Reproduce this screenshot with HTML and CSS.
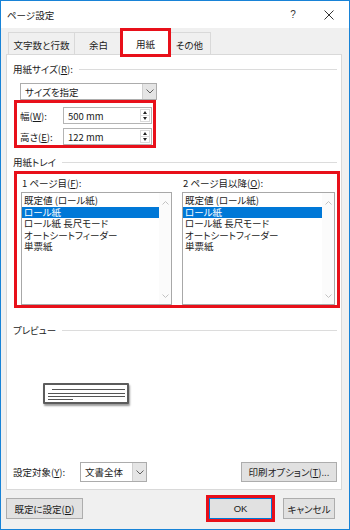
FILE: index.html
```html
<!DOCTYPE html>
<html lang="ja">

<head>
    <meta charset="UTF-8" />
    <title>ページ設定</title>
    <link rel="stylesheet" href="styles.css">
</head>

<body>

    <div class="dialog">
        <div class="titlebar">
            <span class="title">ページ設定</span>
            <span class="help">?</span>
            <span class="close">
                <svg width="10" height="10" viewBox="0 0 10 10">
                    <path d="M0.5 0.5 L9.5 9.5 M9.5 0.5 L0.5 9.5" stroke="#333" stroke-width="1" fill="none" />
                </svg>
            </span>
        </div>

        <div class="body">
            <div class="tabs">
                <div class="tab tab-1">文字数と行数</div>
                <div class="tab tab-2">余白</div>
                <div class="tab tab-3 active">用紙</div>
                <div class="tab tab-4">その他</div>
            </div>

            <div class="panel">
                <div class="group first"><span>用紙サイズ(<u>R</u>):</span></div>

                <div class="combo size-combo">
                    <span class="combo-text">サイズを指定</span>
                    <span class="drop">
                        <svg width="8" height="5" viewBox="0 0 8 5">
                            <path d="M0.5 0.5 L4 4 L7.5 0.5" stroke="#606060" fill="none" />
                        </svg>
                    </span>
                </div>

                <div class="dims mark">
                    <div class="dim-row">
                        <label>幅(<u>W</u>):</label>
                        <div class="spin">
                            <span class="spin-val">500 mm</span>
                            <span class="spin-btns">
                                <span class="up"></span>
                                <span class="down"></span>
                            </span>
                        </div>
                    </div>
                    <div class="dim-row">
                        <label>高さ(<u>E</u>):</label>
                        <div class="spin">
                            <span class="spin-val">122 mm</span>
                            <span class="spin-btns">
                                <span class="up"></span>
                                <span class="down"></span>
                            </span>
                        </div>
                    </div>
                </div>

                <div class="group tray-group"><span>用紙トレイ</span></div>

                <div class="trays mark">
                    <div class="tray tray-1">
                        <div class="tray-label">1 ページ目(<u>F</u>):</div>
                        <div class="listbox">
                            <div class="items">
                                <div class="item">既定値 (ロール紙)</div>
                                <div class="item selected">ロール紙</div>
                                <div class="item">ロール紙 長尺モード</div>
                                <div class="item">オートシートフィーダー</div>
                                <div class="item">単票紙</div>
                            </div>
                            <div class="scrollbar">
                                <svg width="7" height="4" viewBox="0 0 7 4">
                                    <path d="M0.5 3.5 L3.5 0.5 L6.5 3.5" stroke="#c2c2c2" fill="none" />
                                </svg>
                                <svg width="7" height="4" viewBox="0 0 7 4">
                                    <path d="M0.5 0.5 L3.5 3.5 L6.5 0.5" stroke="#c2c2c2" fill="none" />
                                </svg>
                            </div>
                        </div>
                    </div>
                    <div class="tray tray-2">
                        <div class="tray-label">2 ページ目以降(<u>O</u>):</div>
                        <div class="listbox">
                            <div class="items">
                                <div class="item">既定値 (ロール紙)</div>
                                <div class="item selected">ロール紙</div>
                                <div class="item">ロール紙 長尺モード</div>
                                <div class="item">オートシートフィーダー</div>
                                <div class="item">単票紙</div>
                            </div>
                            <div class="scrollbar">
                                <svg width="7" height="4" viewBox="0 0 7 4">
                                    <path d="M0.5 3.5 L3.5 0.5 L6.5 3.5" stroke="#c2c2c2" fill="none" />
                                </svg>
                                <svg width="7" height="4" viewBox="0 0 7 4">
                                    <path d="M0.5 0.5 L3.5 3.5 L6.5 0.5" stroke="#c2c2c2" fill="none" />
                                </svg>
                            </div>
                        </div>
                    </div>
                </div>

                <div class="group preview-group"><span>プレビュー</span></div>

                <div class="preview">
                    <div class="pline l1"></div>
                    <div class="pline l2"></div>
                    <div class="pline l3"></div>
                    <div class="pline l4"></div>
                </div>

                <div class="apply-row">
                    <span class="apply-label">設定対象(<u>Y</u>):</span>
                    <div class="combo apply-combo">
                        <span class="combo-text">文書全体</span>
                        <span class="drop">
                            <svg width="8" height="5" viewBox="0 0 8 5">
                                <path d="M0.5 0.5 L4 4 L7.5 0.5" stroke="#606060" fill="none" />
                            </svg>
                        </span>
                    </div>
                    <button class="btn print-btn">印刷オプション(<u>T</u>)...</button>
                </div>
            </div>

            <div class="footer">
                <button class="btn default-btn">既定に設定(<u>D</u>)</button>
                <button class="btn ok-btn">OK</button>
                <button class="btn cancel-btn">キャンセル</button>
            </div>
        </div>
    </div>

</body>

</html>
```

FILE: styles.css
```css
* {
    box-sizing: border-box;
}

body {
    margin: 0;
    font-family: "Noto Sans CJK JP", "Noto Sans", sans-serif;
    font-size: 9.5px;
    font-feature-settings: "palt";
    color: #1a1a1a;
    background: #fff;
}

u {
    text-decoration: underline;
    text-underline-offset: 1px;
}

.dialog {
    width: 350px;
    height: 530px;
    border: 1px solid #1883d7;
    display: flex;
    flex-direction: column;
    background: #f0f0f0;
}

/* --- title bar --- */
.titlebar {
    height: 27px;
    background: #fff;
    display: flex;
    align-items: center;
    padding-left: 6px;
    flex-shrink: 0;
}

.title {
    flex: 1;
}

.help {
    width: 30px;
    text-align: center;
    font-family: "Liberation Sans", sans-serif;
    font-size: 10px;
    color: #333;
}

.close {
    width: 41px;
    display: flex;
    justify-content: center;
    align-items: center;
}

/* --- body --- */
.body {
    flex: 1;
    display: flex;
    flex-direction: column;
    padding: 0 7px 0 5px;
}

.tabs {
    height: 26px;
    display: flex;
    align-items: flex-end;
    padding-left: 2px;
    flex-shrink: 0;
}

.tab {
    height: 22px;
    border: 1px solid #d9d9d9;
    border-bottom: none;
    background: #f0f0f0;
    display: flex;
    align-items: center;
    justify-content: center;
    padding-top: 2px;
    margin-right: -1px;
}

.tab-1 {
    width: 67px;
}

.tab-2 {
    width: 49px;
}

.tab-3 {
    width: 47px;
}

.tab-4 {
    width: 43px;
}

.tab.active {
    height: 25px;
    margin-bottom: -1px;
    background: #fff;
    position: relative;
    z-index: 1;
    outline: 3px solid #e8101a;
    outline-offset: -1px;
}

.panel {
    flex: 1;
    border: 1px solid #d9d9d9;
    background: #fff;
    padding: 0 4px 0 6px;
    display: flex;
    flex-direction: column;
}

.group {
    display: flex;
    align-items: center;
    height: 12px;
    line-height: 12px;
    gap: 6px;
    white-space: nowrap;
}

.group::after {
    content: "";
    flex: 1;
    height: 1px;
    background: #dcdcdc;
}

.group.first {
    margin-top: 8px;
}

.mark {
    outline: 3px solid #e8101a;
}

/* --- combo boxes --- */
.combo {
    display: flex;
    border: 1px solid #acacac;
    background: #fff;
}

.combo-text {
    flex: 1;
    padding-left: 4px;
    display: flex;
    align-items: center;
}

.drop {
    width: 14px;
    background: #e5e5e5;
    border-left: 1px solid #cfcfcf;
    display: flex;
    align-items: center;
    justify-content: center;
}

.size-combo {
    margin-top: 8px;
    margin-left: 7px;
    width: 137px;
    height: 17px;
}

/* --- width / height --- */
.dims {
    margin-top: 3px;
    margin-left: 4px;
    width: 136px;
    padding: 4px 0 0 3px;
    display: flex;
    flex-direction: column;
    gap: 4px;
}

.dim-row {
    display: flex;
    align-items: center;
    height: 17px;
}

.dim-row label {
    width: 43px;
}

.spin {
    width: 89px;
    height: 17px;
    border: 1px solid #b4b4b4;
    display: flex;
    padding: 1px;
}

.spin-val {
    flex: 1;
    padding-left: 3px;
    display: flex;
    align-items: center;
}

.spin-btns {
    width: 10px;
    border: 1px solid #dadada;
    display: flex;
    flex-direction: column;
}

.spin-btns span {
    flex: 1;
    display: flex;
    align-items: center;
    justify-content: center;
}

.spin-btns .up {
    border-bottom: 1px solid #dadada;
}

.spin-btns .up::before {
    content: "";
    border-left: 2.5px solid transparent;
    border-right: 2.5px solid transparent;
    border-bottom: 3px solid #222;
}

.spin-btns .down::before {
    content: "";
    border-left: 2.5px solid transparent;
    border-right: 2.5px solid transparent;
    border-top: 3px solid #222;
}

/* --- paper trays --- */
.tray-group {
    margin-top: 11px;
}

.trays {
    margin-top: 6px;
    margin-left: 4px;
    width: 320px;
    height: 131px;
    padding: 3px 2px 0 4px;
    display: flex;
    gap: 10px;
}

.tray {
    display: flex;
    flex-direction: column;
}

.tray-1 {
    width: 151px;
}

.tray-2 {
    width: 153px;
}

.tray-label {
    height: 12px;
    line-height: 12px;
    margin-bottom: 3px;
    padding-left: 1px;
    white-space: nowrap;
}

.listbox {
    height: 113px;
    border: 1px solid #a8a8a8;
    display: flex;
}

.items {
    flex: 1;
    padding-top: 2px;
}

.item {
    height: 11.5px;
    line-height: 11.5px;
    padding-left: 2px;
    white-space: nowrap;
}

.item.selected {
    background: #0078d7;
    color: #fff;
}

.scrollbar {
    width: 12px;
    background: #fbfbfb;
    display: flex;
    flex-direction: column;
    justify-content: space-between;
    align-items: center;
    padding: 8px 0 6px;
}

/* --- preview --- */
.preview-group {
    margin-top: 19px;
}

.preview {
    margin-top: 47px;
    margin-left: 30px;
    width: 86px;
    height: 21px;
    border: 2px solid #5c5c5c;
    border-radius: 1px;
    background: #fff;
    box-shadow: 1px 2px 2px #9a9a9a;
}

.pline {
    height: 1px;
    background: #555;
    margin-left: 3px;
    width: 77px;
}

.pline.l1 {
    margin-top: 4px;
    margin-left: 7px;
    width: 73px;
}

.pline.l2 {
    margin-top: 3px;
}

.pline.l3 {
    margin-top: 2px;
}

.pline.l4 {
    margin-top: 2px;
    width: 25px;
}

/* --- apply row --- */
.apply-row {
    margin-top: auto;
    margin-bottom: 7px;
    height: 20px;
    display: flex;
    align-items: center;
}

.apply-label {
    width: 67px;
}

.apply-combo {
    width: 67px;
    height: 20px;
}

.btn {
    font-family: inherit;
    font-size: 9.5px;
    font-feature-settings: "palt";
    color: #1a1a1a;
    background: #e1e1e1;
    border: 1px solid #adadad;
    padding: 0;
    height: 20px;
    display: flex;
    align-items: center;
    justify-content: center;
}

.print-btn {
    margin-left: auto;
    width: 96px;
}

/* --- footer --- */
.footer {
    height: 39px;
    flex-shrink: 0;
    display: flex;
    align-items: flex-start;
    padding-top: 8px;
}

.default-btn {
    width: 77px;
    height: 21px;
}

.ok-btn {
    margin-left: auto;
    width: 63px;
    height: 21px;
    border-color: #0078d7;
    font-family: "Liberation Sans", sans-serif;
    outline: 3px solid #e8101a;
}

.cancel-btn {
    margin-left: 11px;
    margin-right: 7px;
    width: 52px;
    height: 21px;
}
```
